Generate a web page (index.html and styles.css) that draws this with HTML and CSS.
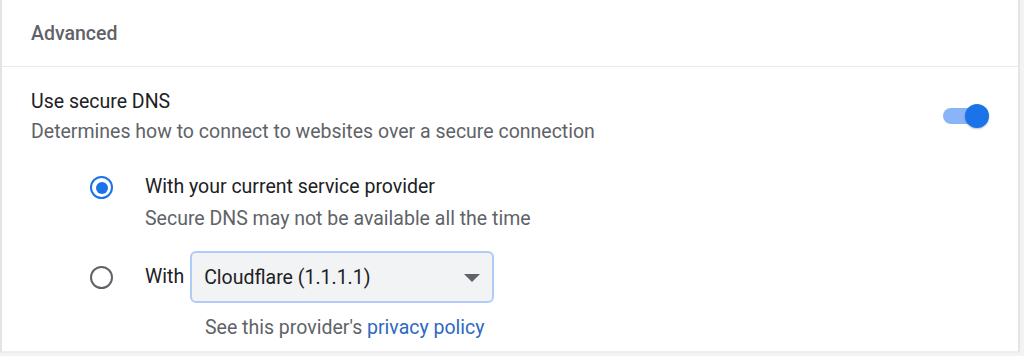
FILE: index.html
```html
<!DOCTYPE html>
<html>
<head>
<meta charset="utf-8">
<link rel="stylesheet" href="styles.css">
</head>
<body>
<div class="card">
  <div class="header">Advanced</div>
  <div class="section">
    <div class="setting">
      <div class="setting-text">
        <div class="title">Use secure DNS</div>
        <div class="sub">Determines how to connect to websites over a secure connection</div>
      </div>
      <div class="toggle"><div class="track"></div><div class="knob"></div></div>
    </div>
    <div class="options">
      <div class="option">
        <div class="radio checked"><div class="dot"></div></div>
        <div class="opt-text">
          <div class="title">With your current service provider</div>
          <div class="sub opt-sub">Secure DNS may not be available all the time</div>
        </div>
      </div>
      <div class="option custom">
        <div class="radio"></div>
        <div class="opt-text">
          <div class="with-row">
            <span class="title">With</span>
            <div class="select">
              <span>Cloudflare (1.1.1.1)</span>
              <span class="caret"></span>
            </div>
          </div>
          <div class="sub policy">See this provider's <a href="#">privacy policy</a></div>
        </div>
      </div>
    </div>
  </div>
</div>
</body>
</html>
```
FILE: styles.css
```css
html, body {
  margin: 0;
  padding: 0;
}
body {
  background: #f1f3f4;
  font-family: Roboto, "Liberation Sans", sans-serif;
  width: 1024px;
  height: 356px;
  overflow: hidden;
}
.card {
  width: 1016px;
  background: #fff;
  border-left: 2px solid #e3e4e6;
  border-right: 2px solid #e3e4e6;
  border-bottom: 2px solid #eceef0;
  height: 351px;
}
.header {
  height: 67px;
  box-sizing: border-box;
  padding-left: 29px;
  display: flex;
  align-items: center;
  font-size: 19.5px;
  font-weight: 500;
  color: #5f6368;
  border-bottom: 1px solid #e8eaed;
}
.section {
  padding: 20px 0 0 29px;
}
.setting {
  display: flex;
  align-items: center;
  justify-content: space-between;
  padding-right: 29px;
}
.title {
  font-size: 19.5px;
  line-height: 30px;
  color: #202124;
}
.sub {
  font-size: 19.5px;
  line-height: 30px;
  color: #5f6368;
}
.opt-sub {
  margin-top: 2px;
}
.toggle {
  position: relative;
  width: 46px;
  height: 24px;
  margin-top: -2px;
}
.track {
  position: absolute;
  left: 0;
  top: 4px;
  width: 42px;
  height: 16px;
  border-radius: 8px;
  background: #8ab4f8;
}
.knob {
  position: absolute;
  right: 0;
  top: 0;
  width: 24px;
  height: 24px;
  border-radius: 50%;
  background: #1a73e8;
  box-shadow: 0 1px 2px rgba(0,0,0,0.25);
}
.options {
  padding: 25px 0 0 59px;
}
.option {
  display: flex;
  align-items: flex-start;
}
.radio {
  width: 23px;
  height: 23px;
  box-sizing: border-box;
  border: 2.5px solid #5f6368;
  border-radius: 50%;
  margin-top: 4px;
  margin-right: 32px;
  display: flex;
  align-items: center;
  justify-content: center;
  flex: none;
}
.radio.checked {
  border-color: #1a73e8;
}
.dot {
  width: 12px;
  height: 12px;
  border-radius: 50%;
  background: #1a73e8;
}
.option.custom {
  margin-top: 17px;
}
.option.custom .radio {
  margin-top: 15px;
}
.with-row {
  display: flex;
  align-items: center;
  gap: 6px;
}
.select {
  width: 304px;
  height: 52px;
  box-sizing: border-box;
  border: 2px solid #aecbfa;
  border-radius: 6px;
  background: #f1f3f4;
  display: flex;
  align-items: center;
  justify-content: space-between;
  padding: 0 12px 0 12px;
  font-size: 19.5px;
  color: #202124;
}
.caret {
  width: 0;
  height: 0;
  border-left: 8px solid transparent;
  border-right: 8px solid transparent;
  border-top: 8px solid #5f6368;
  margin-top: 2px;
}
.policy {
  margin-left: 60px;
  margin-top: 10px;
}
.policy a {
  color: #2e69c0;
  text-decoration: none;
}
```
